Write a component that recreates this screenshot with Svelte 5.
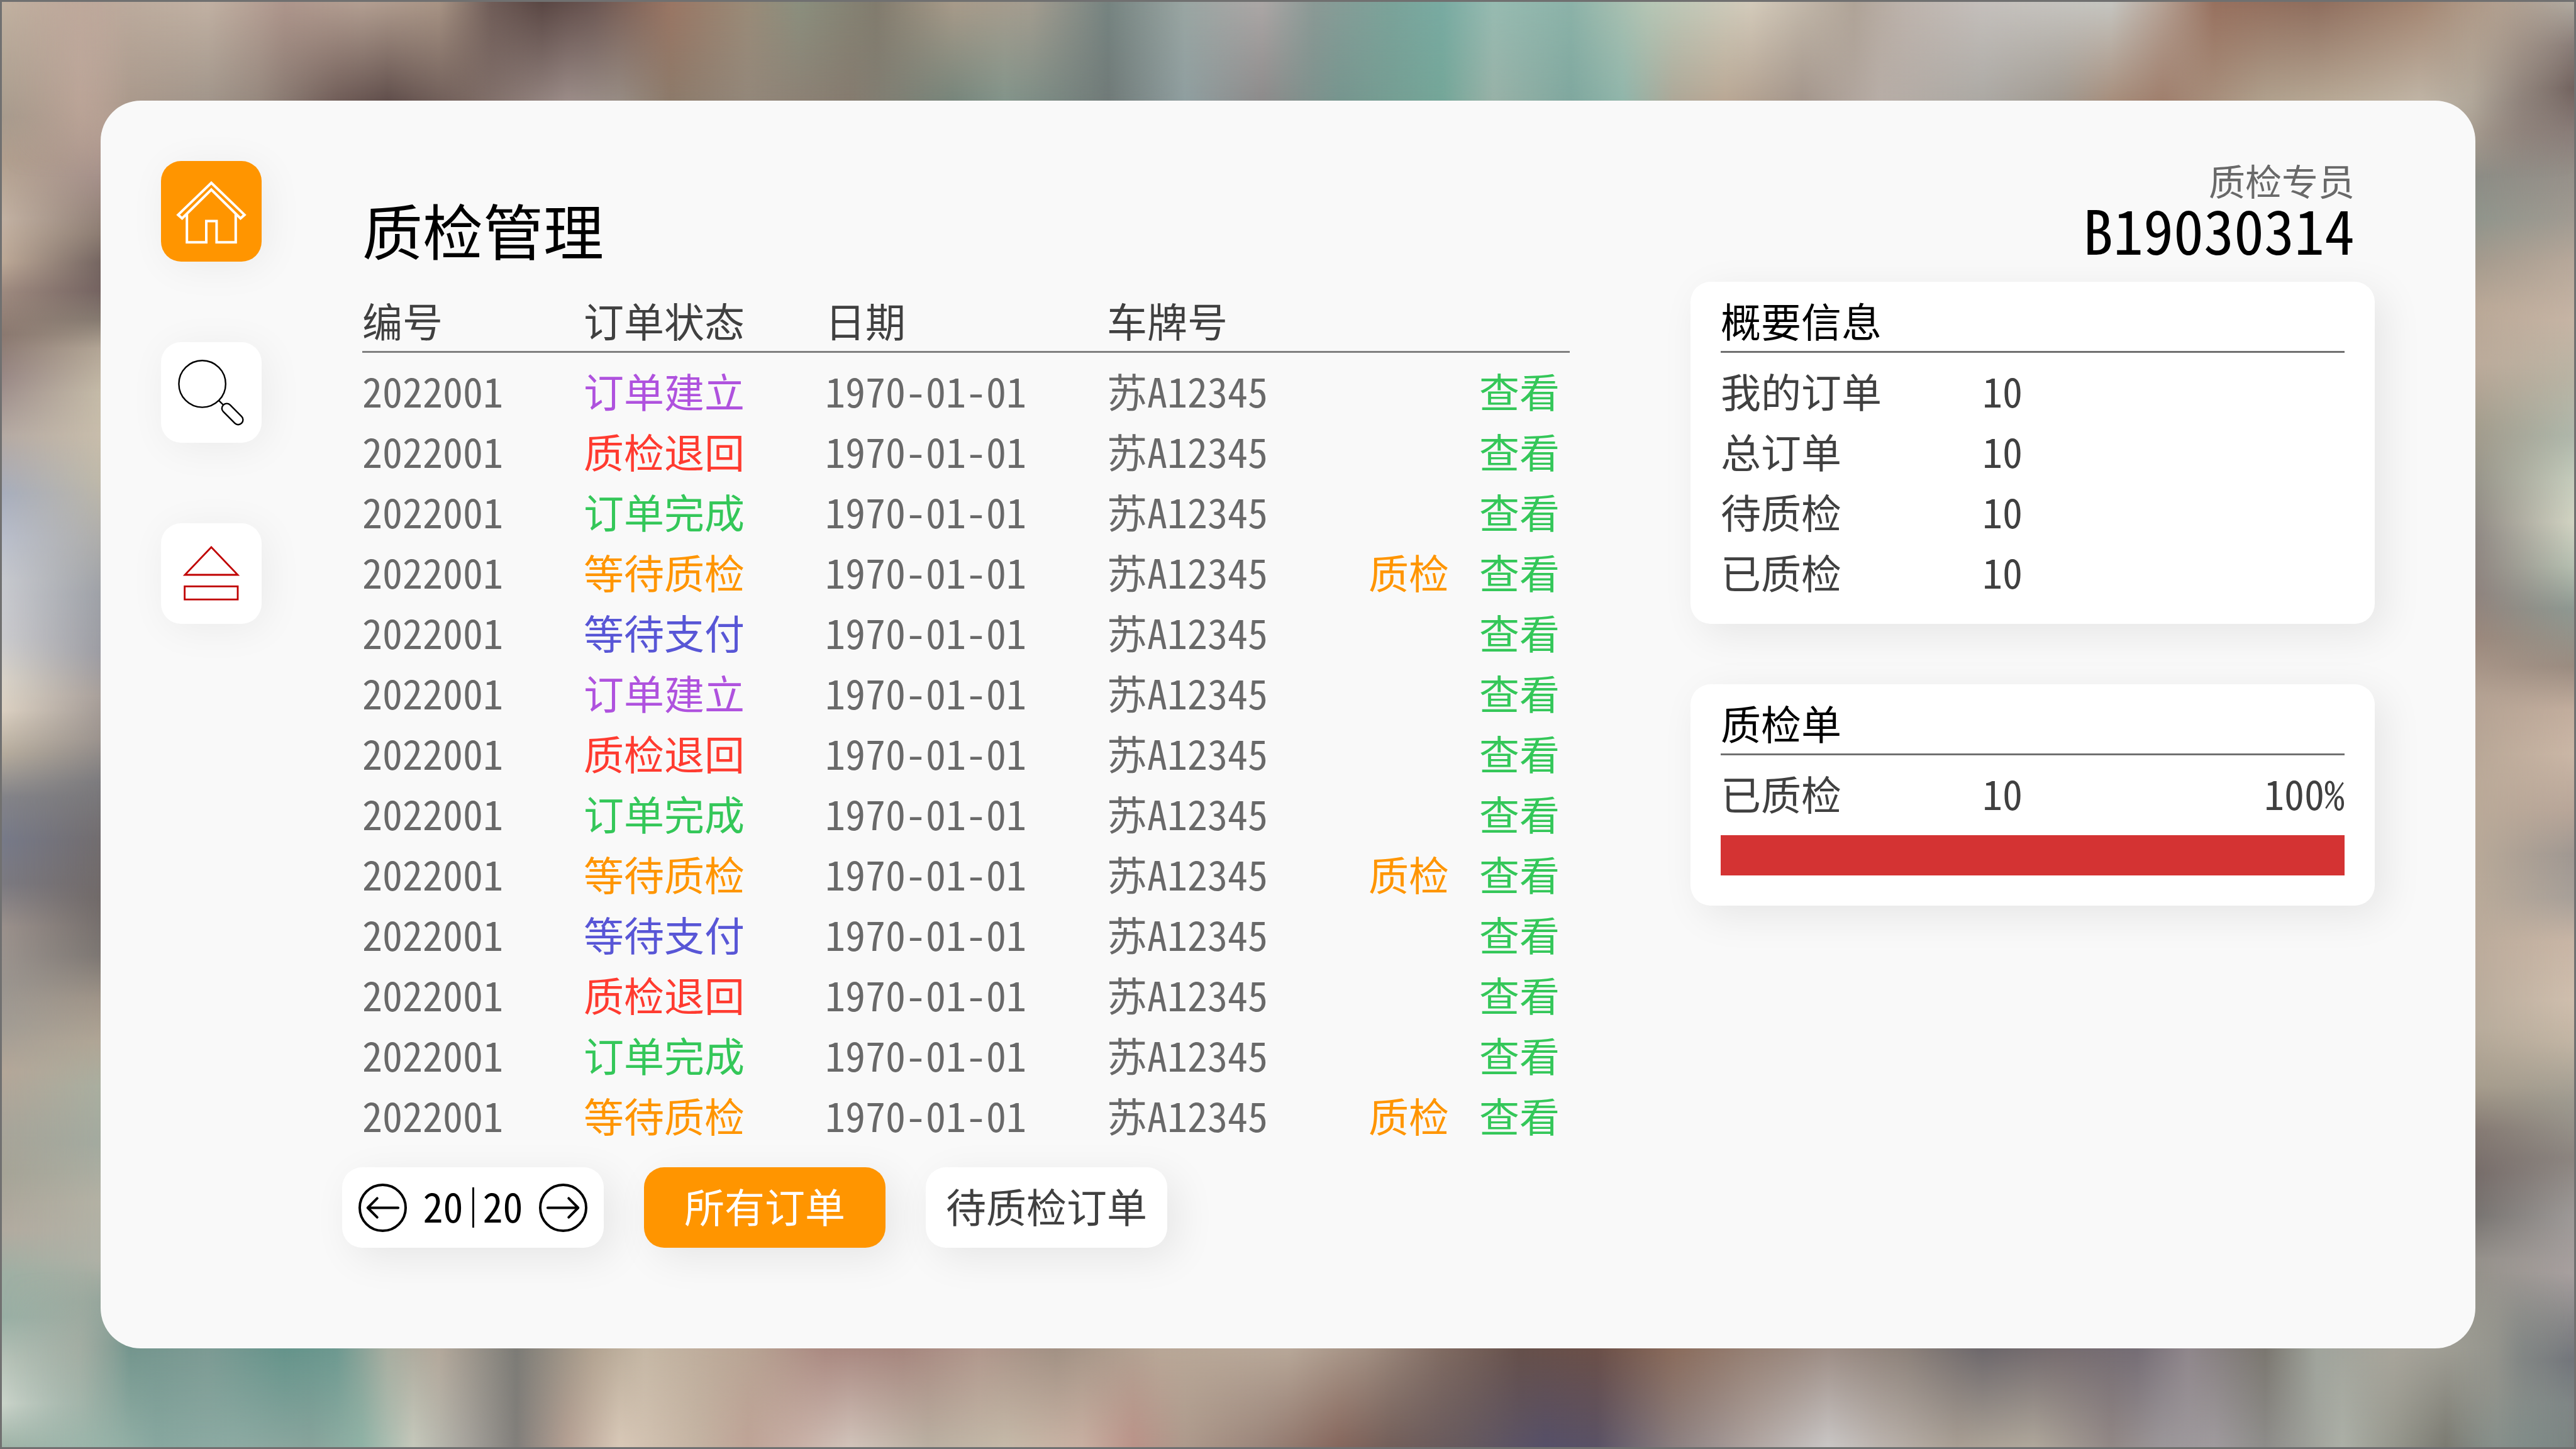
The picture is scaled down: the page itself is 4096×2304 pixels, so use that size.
<script>
  const cycle = ['created', 'returned', 'done', 'waiting', 'paying'];
  const labels = {
    created: '订单建立',
    returned: '质检退回',
    done: '订单完成',
    waiting: '等待质检',
    paying: '等待支付',
  };

  const states = [...cycle, ...cycle, 'returned', 'done', 'waiting'];
  const orders = states.map((state) => ({
    id: '2022001',
    state,
    date: '1970-01-01',
    plate: '苏A12345',
  }));

  const summary = [
    { name: '我的订单', value: 10 },
    { name: '总订单', value: 10 },
    { name: '待质检', value: 10 },
    { name: '已质检', value: 10 },
  ];

  const progress = 100;
  let filter = $state('all');
</script>

<div class="screen">
  <div class="backdrop" aria-hidden="true">
    <div class="side left"><div class="inner"></div></div>
    <div class="side right"><div class="inner"></div></div>
    <div class="band top"><div class="inner"></div></div>
    <div class="band bottom"><div class="inner"></div></div>
  </div>

  <div class="panel">
    <nav class="rail" aria-label="主导航">
      <button class="tile active" type="button" aria-label="首页">
        <svg viewBox="0 0 200 200" fill="none" stroke="#fff" stroke-width="5">
          <path d="M100 43.500 L166 107 L158 114 L100 57 L42 114 L34 107 Z" />
          <path d="M51.500 106 V161.500 H90 V119.500 H110.500 V161.500 H148.500 V106" />
        </svg>
      </button>
      <button class="tile" type="button" aria-label="搜索">
        <svg viewBox="0 0 200 200" fill="none" stroke="#000" stroke-width="3">
          <circle cx="82" cy="83" r="46.500" />
          <path d="M115 116 L124 125" />
          <rect x="116.500" y="133.500" width="51" height="19" rx="9" transform="rotate(45 142 143)" />
        </svg>
      </button>
      <button class="tile" type="button" aria-label="退出">
        <svg viewBox="0 0 200 200" fill="none" stroke="#c00000" stroke-width="3.500">
          <path d="M100 47.500 L47.500 102.500 H152.500 Z" />
          <rect x="47" y="125.500" width="105.500" height="26" />
        </svg>
      </button>
    </nav>

    <main class="orders">
      <h1>质检管理</h1>
      <table>
        <colgroup>
          <col class="c-id" /><col class="c-state" /><col class="c-date" />
          <col class="c-plate" /><col class="c-check" /><col class="c-view" />
        </colgroup>
        <thead>
          <tr>
            <th>编号</th>
            <th>订单状态</th>
            <th>日期</th>
            <th>车牌号</th>
            <th></th>
            <th></th>
          </tr>
        </thead>
        <tbody>
          {#each orders as order}
            <tr>
              <td>{order.id}</td>
              <td class={order.state}>{labels[order.state]}</td>
              <td>{order.date}</td>
              <td>{order.plate}</td>
              <td>
                {#if order.state === 'waiting'}
                  <button class="link waiting" type="button">质检</button>
                {/if}
              </td>
              <td><button class="link done" type="button">查看</button></td>
            </tr>
          {/each}
        </tbody>
      </table>

      <div class="actions">
        <div class="pager">
          <button class="step" type="button" aria-label="上一页">
            <svg viewBox="0 0 97 97" fill="none" stroke="#000" stroke-width="5" stroke-linecap="round" stroke-linejoin="round">
              <circle cx="48.500" cy="48.500" r="46" />
              <path d="M79.500 48.500 H19 M37.500 29.500 L18.500 48.500 L37.500 67.500" />
            </svg>
          </button>
          <span class="pages"><span>20</span><i></i><span>20</span></span>
          <button class="step" type="button" aria-label="下一页">
            <svg viewBox="0 0 97 97" fill="none" stroke="#000" stroke-width="5" stroke-linecap="round" stroke-linejoin="round">
              <circle cx="48.500" cy="48.500" r="46" />
              <path d="M17.500 48.500 H78 M59.500 29.500 L78.500 48.500 L59.500 67.500" />
            </svg>
          </button>
        </div>
        <button class="filter" class:active={filter === 'all'} type="button" onclick={() => (filter = 'all')}>所有订单</button>
        <button class="filter" class:active={filter === 'pending'} type="button" onclick={() => (filter = 'pending')}>待质检订单</button>
      </div>
    </main>

    <aside class="info">
      <div class="user">
        <span class="role">质检专员</span>
        <span class="number">B19030314</span>
      </div>

      <section class="card">
        <h2>概要信息</h2>
        <dl>
          {#each summary as item}
            <div class="line"><dt>{item.name}</dt><dd>{item.value}</dd></div>
          {/each}
        </dl>
      </section>

      <section class="card meter">
        <h2>质检单</h2>
        <dl>
          <div class="line"><dt>已质检</dt><dd>10</dd><dd class="share">{progress}%</dd></div>
        </dl>
        <div class="track" role="progressbar" aria-label="已质检" aria-valuenow={progress}>
          <div class="fill" style="width: {progress}%"></div>
        </div>
      </section>
    </aside>
  </div>
</div>

<style>
  :global(body) {
    background: #a89b90;
  }

  .screen {
    box-sizing: border-box;
    display: grid;
    min-height: 100vh;
    border: 3px solid #707070;
    font-family: 'Noto Sans CJK SC', sans-serif;
    font-feature-settings: 'hwid';
    font-weight: 400;
    font-size: 64px;
    line-height: 88px;
    color: #404040;
  }

  .backdrop,
  .panel {
    grid-area: 1 / 1;
  }

  /* Soft photographic backdrop: colour bands along each edge of the window */
  .backdrop {
    display: grid;
    overflow: hidden;
  }

  .side,
  .band {
    grid-area: 1 / 1;
  }

  .side {
    width: 240px;
  }

  .band {
    height: 280px;
    mask-image: linear-gradient(var(--inward), #000 160px, transparent), linear-gradient(90deg, transparent, #000 200px, #000 calc(100% - 200px), transparent);
    mask-composite: intersect;
  }

  .inner {
    height: 100%;
    mask-image: linear-gradient(var(--inward), transparent, #000 160px);
  }

  .left {
    --inward: 90deg;
    background: linear-gradient(#c2b2a1, #b5a797 4%, #a99c8e 8%, #b2a08f 11%, #c3b2a3 15%, #bda997 18%, #9f8b80 20%, #8b7970 23%, #9a8986 26%, #b5aaa3 30%, #a8aebd 34%, #b9becb 37%, #c7c9cf 40%, #cbcbce 44%, #d9d3c8 47%, #dcd1c2 49%, #b7ad9e 52%, #848489 55%, #777a89 58%, #7c7a81 61%, #9b918c 64%, #9b958f 68%, #a39d94 71%, #b4a799 74%, #a8a59a 78%, #a6a497 81%, #b2aba0 85%, #9fb0a4 88%, #9ab0a5 91%, #b8c4b9 94%, #ccd5cb 97%, #9fb3a7);
  }

  .left .inner {
    background: linear-gradient(#bfa99d, #bda89c 4%, #b79f93 8%, #a5908a 12%, #8b7b71 16%, #736460 18%, #736260 20%, #857a70 22%, #b3a696 24%, #c5bba8 27%, #c8bdab 30%, #bfb9a9 33%, #aeadaa 37%, #9da0a6 41%, #9b9ba2 45%, #a79e99 48%, #9a928d 51%, #7b7a7d 54%, #716c6e 58%, #706968 62%, #7c7672 66%, #9f9488 69%, #b0a696 72%, #a9ae9f 75%, #a3aa9f 79%, #b3b1a4 83%, #afb1a6 87%, #98a79d 90%, #93a69e 94%, #93aaa3 97%, #8caba4);
  }

  .right {
    --inward: -90deg;
    justify-self: end;
    background: linear-gradient(#b2aca2, #8a7d78 3%, #72635f 6%, #8a7d79 9%, #97918a 12%, #a19b92 15%, #b8a99b 18%, #c7b5a5 22%, #b9b4a4 26%, #afb8ab 30%, #c5ccbc 33%, #d2d4c3 36%, #b6c0b1 39%, #8e9992 42%, #9b8c81 46%, #c3ae9e 49%, #cbb7a6 52%, #b8a699 56%, #a09892 59%, #a8a099 62%, #c9b6a6 65%, #d0bfae 69%, #c2b5a4 72%, #9f9b90 76%, #8c8580 80%, #9e9a98 84%, #a8a09f 88%, #8b8a8b 91%, #72757b 94%, #7f8686 97%, #7d8583);
  }

  .right .inner {
    background: linear-gradient(#ae9383, #b8a695 3%, #b9ad9d 6%, #9d9185 9%, #8c8c85 12%, #8f948b 15%, #a49a8d 18%, #b8a796 21%, #bbaa9a 25%, #a59d8d 29%, #979489 33%, #8e8782 37%, #8e827d 41%, #9b887c 44%, #b3a192 48%, #baa998 54%, #b8a998 60%, #bbab9b 66%, #b7ab9b 71%, #a69c8c 75%, #857a73 78%, #766c69 81%, #777370 84%, #94908a 87%, #98978e 92%, #96978f 96%, #829490);
  }

  .top {
    --inward: 180deg;
    background: linear-gradient(90deg, #b8a396, #bda79a 3%, #bcab9d 5%, #c1b1a3 8%, #ae968c 11%, #b39f92 14%, #a89485 17%, #705d58 19%, #5a4744 21%, #6b5652 23%, #9a7664 26%, #9a8b78 29%, #8b8f7e 31%, #827c6e 34%, #a89b8a 37%, #a49d90 40%, #768481 43%, #9aa6a3 46%, #aca7a6 49%, #8b9a96 51%, #7ba39a 54%, #79aba2 56%, #97bbb1 58%, #8cb3a9 61%, #b5c6b5 64%, #d4cbbb 68%, #b0a498 72%, #bdb3ac 74%, #c5c0bc 77%, #c6c6c1 82%, #b5a194 84%, #98715f 86%, #8f6e5e 90%, #a48672 94%, #b3a392 97%, #aaa59c);
  }

  .top .inner {
    background: linear-gradient(90deg, #a89688, #bda699 3%, #aa998c 5%, #a1958a 8%, #95877d 10%, #705d58 13%, #5f4d4a 15%, #786660 18%, #9c8d89 22%, #978c84 24%, #8c7a6a 26%, #93877a 29%, #857b6f 33%, #76857b 37%, #82948a 39%, #707a78 43%, #8f9e9f 46%, #8c8a8a 49%, #76958e 52%, #74a698 56%, #98b1a7 58%, #7fa79e 61%, #90b5aa 63%, #ada797 65%, #b9a794 67%, #a3958b 70%, #b7ada6 73%, #aba8a3 77%, #a0988f 80%, #a68d7b 82%, #9f7e6c 84%, #b0a18e 88%, #b9ab98 91%, #c0b5a6 94%, #b0a79a 96%, #857a76 98%, #6f6463);
  }

  .bottom {
    --inward: 0deg;
    align-self: end;
    background: linear-gradient(90deg, #bccabb, #a3bbae 3%, #88a8a0 6%, #8daba3 9%, #88a49c 12%, #90b3a6 14%, #c6c9bc 16%, #a8a59e 18%, #827f7b 20%, #b6a194 22%, #d9c9b8 24%, #c5b4a3 27%, #bfa497 29%, #c9b1a7 31%, #d2c4bb 33%, #bbb0a2 36%, #c6baa9 39%, #c9b0a2 42%, #bb9389 44%, #ae9a8c 46%, #9b857a 49%, #86675d 52%, #735f5a 54%, #65595f 57%, #565069 60%, #5a5266 62%, #8b7f80 65%, #afa4a0 68%, #cac7c6 71%, #bcb4ae 73%, #a99f94 76%, #b0a89c 79%, #928886 82%, #9c979a 84%, #a09b9e 86%, #8e8d8a 88%, #acb0a7 91%, #96978d 93%, #7b7b72 95%, #8a8f89 97%, #7b8b88);
  }

  .bottom .inner {
    background: linear-gradient(90deg, #b5bdb3, #a8aea3 3%, #73958d 5%, #7c9a93 8%, #64938a 11%, #6c988f 13%, #a8ada0 15%, #b3a89b 17%, #7c7b76 20%, #b2a391 23%, #c5b7a5 25%, #b8a494 29%, #a98880 32%, #a5857d 35%, #b0978c 38%, #a19083 41%, #b8a797 45%, #b8a899 50%, #a39083 53%, #806b62 56%, #66504a 59%, #6b4f47 62%, #8a6b5b 65%, #957f73 68%, #9c8c84 71%, #8b8079 74%, #6b666a 77%, #756b6e 80%, #746c74 83%, #8f868b 85%, #7a766f 88%, #a0a49c 90%, #a8a59b 93%, #96968e 97%, #7d8584 98%, #747e80);
  }

  .panel {
    position: relative;
    display: grid;
    grid-template-columns: 160px minmax(0, 2272fr) minmax(0, 1088fr);
    margin: 157px;
    padding: 96px 160px 96px 96px;
    border-radius: 64px;
    background: #f9f9f9;
  }

  button {
    margin: 0;
    padding: 0;
    border: 0;
    background: none;
    font: inherit;
    font-feature-settings: inherit;
    color: inherit;
    cursor: pointer;
  }

  svg {
    display: block;
    width: 100%;
    height: 100%;
  }

  .rail {
    display: flex;
    flex-direction: column;
    gap: 128px;
  }

  .tile,
  .pager,
  .filter,
  .card {
    border-radius: 32px;
    background: #fff;
    box-shadow: 16px 16px 64px rgb(0 0 0 / 8%);
  }

  .tile {
    height: 160px;
    box-shadow: 8px 8px 64px rgb(0 0 0 / 6%);
  }

  .tile.active,
  .filter.active {
    background: #ff9500;
    color: #fff;
  }

  .orders {
    padding: 60px 192px 0 160px;
  }

  h1,
  .number {
    margin: 0;
    font-size: 96px;
    font-weight: inherit;
    line-height: 96px;
    color: #000;
  }

  table {
    width: 100%;
    margin-top: 52px;
    border-collapse: separate;
    border-spacing: 0;
    table-layout: fixed;
  }

  .c-id { width: 352px; }
  .c-state { width: 384px; }
  .c-date { width: 448px; }
  .c-plate { width: 416px; }
  .c-check { width: 176px; }
  .c-view { width: 144px; }

  th,
  td {
    padding: 0 0 8px;
    font-weight: inherit;
    text-align: left;
    white-space: nowrap;
  }

  th {
    padding-bottom: 6px;
    border-bottom: 3px solid #808080;
  }

  td {
    color: #696969;
  }

  tbody::before {
    content: '';
    display: block;
    height: 15px;
  }

  .link {
    display: block;
  }

  .created { color: #af52de; }
  .returned { color: #ff3b30; }
  .done { color: #34c759; }
  .waiting { color: #ff9500; }
  .paying { color: #5856d6; }

  .actions {
    display: flex;
    gap: 64px;
    margin: 32px 0 0 -32px;
  }

  .pager {
    box-sizing: border-box;
    display: flex;
    align-items: center;
    justify-content: space-between;
    width: 416px;
    height: 128px;
    padding: 0 26px;
    color: #000;
  }

  .step {
    width: 77px;
    height: 77px;
  }

  .pages {
    display: flex;
    align-items: center;
    gap: 14px;
  }

  .pages span {
    padding-bottom: 8px;
  }

  .pages i {
    width: 3px;
    height: 64px;
    background: #000;
  }

  .filter {
    width: 384px;
    height: 128px;
    padding-bottom: 8px;
  }

  .user {
    display: flex;
    flex-direction: column;
    align-items: flex-end;
    height: 192px;
    padding-right: 32px;
  }

  .role {
    font-size: 58px;
    line-height: 60px;
    color: #696969;
  }

  .card {
    padding: 16px 48px 32px;
  }

  .card + .card {
    margin-top: 96px;
  }

  h2 {
    margin: 0 0 15px;
    padding-bottom: 6px;
    border-bottom: 3px solid #707070;
    font-size: 64px;
    font-weight: inherit;
    color: #000;
  }

  dl,
  dd {
    margin: 0;
  }

  .line {
    display: flex;
    padding-bottom: 8px;
  }

  dt {
    width: 416px;
  }

  .share {
    margin-left: auto;
  }

  .meter {
    padding-bottom: 48px;
  }

  .track {
    height: 64px;
    margin-top: 16px;
  }

  .fill {
    height: 100%;
    background: #d43333;
  }
</style>
